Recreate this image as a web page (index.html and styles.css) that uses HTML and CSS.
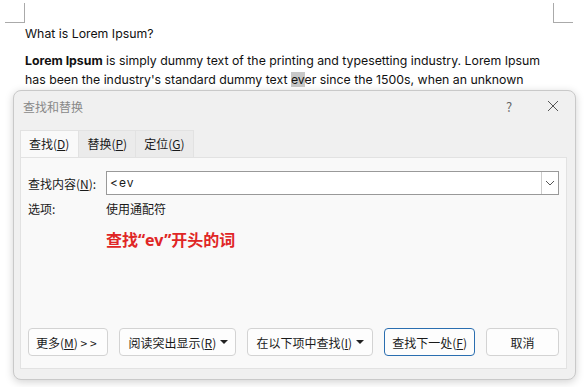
FILE: index.html
```html
<!DOCTYPE html>
<html lang="zh-CN">
<head>
  <meta charset="UTF-8">
  <title>查找和替换</title>
  <link rel="stylesheet" href="styles.css">
</head>
<body>
  <div class="page">
    <div class="marks">
      <span class="mark mark-left"></span>
      <span class="mark mark-right"></span>
    </div>
    <div class="doc">
      <p class="doc-title">What is Lorem Ipsum?</p>
      <p class="doc-text"><strong>Lorem Ipsum</strong> is simply dummy text of the printing and typesetting industry. Lorem Ipsum has been the industry's standard dummy text <span class="hit">ev</span>er since the 1500s, when an unknown</p>
    </div>

    <div class="dialog">
      <div class="titlebar">
        <span class="title">查找和替换</span>
        <span class="help">?</span>
        <svg class="close" width="12" height="12" viewBox="0 0 12 12"><path d="M1 1L11 11M11 1L1 11" stroke="#555" stroke-width="1"/></svg>
      </div>
      <div class="tabs">
        <span class="tab active">查找(<u>D</u>)</span>
        <span class="tab">替换(<u>P</u>)</span>
        <span class="tab">定位(<u>G</u>)</span>
      </div>
      <div class="panel">
        <div class="row">
          <span class="label">查找内容(<u>N</u>):</span>
          <div class="combo">
            <span class="combo-text">&lt;ev</span>
            <span class="combo-btn"><svg width="10" height="6" viewBox="0 0 10 6"><path d="M1 1L5 5L9 1" fill="none" stroke="#555" stroke-width="1"/></svg></span>
          </div>
        </div>
        <div class="row options">
          <span class="label">选项:</span>
          <span>使用通配符</span>
        </div>
        <div class="note">查找“ev”开头的词</div>
        <div class="buttons">
          <button class="btn more"><span>更多(<u>M</u>) &gt; &gt;</span></button>
          <button class="btn read"><span>阅读突出显示(<u>R</u>)</span><span class="caret"></span></button>
          <button class="btn"><span>在以下项中查找(<u>I</u>)</span><span class="caret"></span></button>
          <button class="btn primary"><span>查找下一处(<u>F</u>)</span></button>
          <button class="btn cancel"><span>取消</span></button>
        </div>
      </div>
    </div>
  </div>
</body>
</html>
```

FILE: styles.css
```css
body { margin: 0; background: #fff; font-family: Inter, "Noto Sans", "Noto Sans CJK SC", sans-serif; color: #111; }
.page { position: relative; width: 585px; height: 387px; overflow: hidden; }
.marks { display: flex; justify-content: space-between; padding: 3px 12px 0 5px; }
.mark { width: 19px; height: 19px; border-bottom: 1px solid #aaa; }
.mark-left { border-right: 1px solid #aaa; }
.mark-right { border-left: 1px solid #aaa; }
.doc { padding: 0 36px 0 25px; font-size: 12.3px; }
.doc-title { margin: 2px 0 0; line-height: 18px; }
.doc-text { margin: 8px 0 0; line-height: 19px; }
.doc-text strong { font-weight: 700; }
.hit { background: #c8c8c8; }

.dialog { position: absolute; left: 13px; top: 90px; width: 563px; height: 290px; box-sizing: border-box; background: #f0f0f0; border: 1px solid #c9c9c9; border-radius: 8px; box-shadow: 0 2px 8px rgba(0,0,0,0.18); font-family: "Noto Sans CJK SC", sans-serif; font-size: 12px; color: #1a1a1a; display: flex; flex-direction: column; }
.titlebar { display: flex; align-items: center; height: 30px; padding: 0 0 0 9px; }
.title { flex: 1; color: #888; font-size: 12px; }
.help { width: 20px; color: #666; font-size: 13px; margin-right: 21px; }
.close { margin-right: 16px; }
.tabs { display: flex; padding: 9px 0 0 6px; }
.tab { padding: 0 8px; height: 26px; line-height: 26px; background: #ebebeb; border: 1px solid #e2e2e2; border-bottom: none; margin-right: -1px; }
.tab.active { background: #f9f9f9; padding: 0 9px 0 8px; }
.panel { flex: 1; margin: 0 8px 10px 6px; background: #f9f9f9; border: 1px solid #e2e2e2; padding: 13px 7px 0 7px; display: flex; flex-direction: column; }
.row { display: flex; align-items: center; }
.label { width: 78px; }
.combo { flex: 1; height: 24px; box-sizing: border-box; display: flex; background: #fff; border: 1px solid #999; }
.combo-text { flex: 1; padding-left: 3px; line-height: 22px; font-family: Inter, "Noto Sans", sans-serif; font-size: 12px; letter-spacing: 1px; }
.combo-btn { width: 16px; display: flex; align-items: center; justify-content: center; border-left: 1px solid #ccc; }
.options { margin-top: 5px; }
.note { margin: 10px 0 0 78px; color: #e02626; font-weight: 700; font-size: 16px; font-family: "Noto Sans", "Noto Sans CJK SC", sans-serif; }
.buttons { margin-top: auto; margin-bottom: 12px; display: flex; gap: 11px; }
.btn { height: 28px; padding: 0 8px; background: #fdfdfd; border: 1px solid #d3d3d3; border-radius: 4px; font-family: "Noto Sans CJK SC", sans-serif; font-size: 12px; color: #1a1a1a; display: flex; align-items: center; white-space: nowrap; }
.btn.more { width: 83px; padding: 0 7px; }
.btn.read { width: 117px; }
.btn.primary { border-color: #2a6eb0; width: 91px; justify-content: center; }
.btn.cancel { width: 75px; justify-content: center; }
.caret { width: 0; height: 0; margin-left: 4px; border-left: 4px solid transparent; border-right: 4px solid transparent; border-top: 4px solid #222; }
```
